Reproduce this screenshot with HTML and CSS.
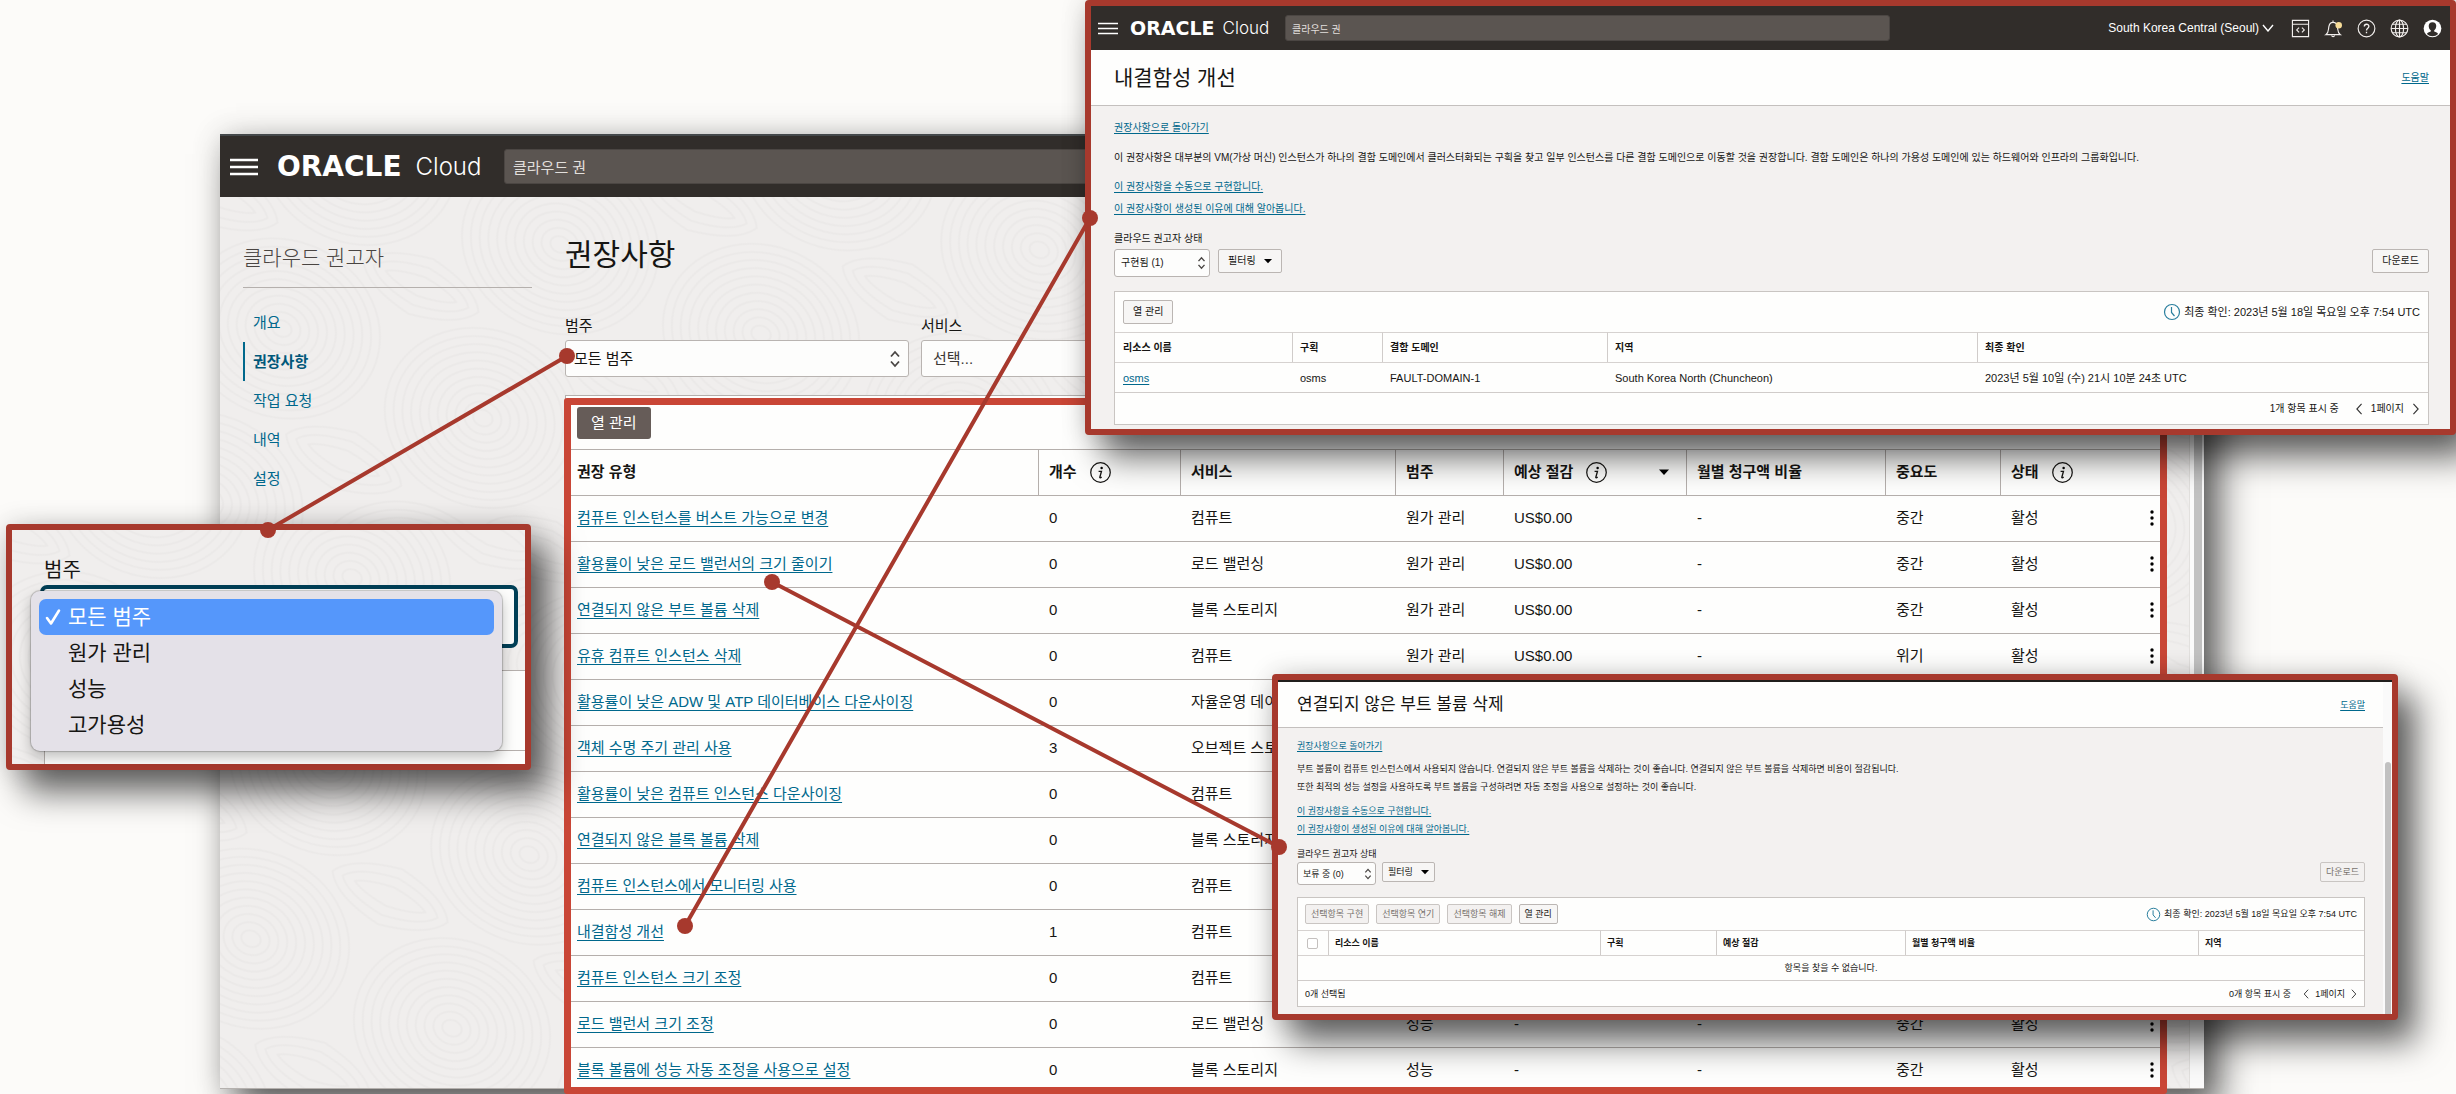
FILE: index.html
```html
<!DOCTYPE html>
<html lang="ko">
<head>
<meta charset="utf-8">
<title>클라우드 권고자 - 권장사항</title>
<link rel="stylesheet" href="styles.css">
</head>
<body>
<svg class="defs" width="0" height="0" aria-hidden="true">
  <defs>
    <symbol id="updown" viewBox="0 0 12 18"><path d="M2 6.500l4-4.500 4 4.500M2 11.500l4 4.500 4-4.500" fill="none" stroke="#4a4644" stroke-width="1.800"/></symbol>
    <symbol id="info" viewBox="0 0 24 24"><circle cx="12" cy="12" r="10.200" fill="none" stroke="#161513" stroke-width="1.300"/><circle cx="13.200" cy="7.300" r="1.300"/><path d="M10 10.800h3l-1.700 6.200c-.2.800.6.900 1.900-.2" fill="none" stroke="#161513" stroke-width="1.400"/></symbol>
    <symbol id="caret" viewBox="0 0 12 8"><path d="M0 1h12L6 7.500z"/></symbol>
    <symbol id="kebab" viewBox="0 0 4 18"><circle cx="2" cy="3" r="1.700"/><circle cx="2" cy="9" r="1.700"/><circle cx="2" cy="15" r="1.700"/></symbol>
    <symbol id="menu" viewBox="0 0 28 18"><path d="M0 2h28M0 9h28M0 16h28" stroke="#fff" stroke-width="2.400"/></symbol>
    <symbol id="clock" viewBox="0 0 18 18"><circle cx="9" cy="9" r="7.500" fill="none" stroke="#2a7f9e" stroke-width="1.200"/><path d="M8.500 4v5.500l3 3.500" fill="none" stroke="#2a7f9e" stroke-width="1.200"/></symbol>
    <symbol id="prev" viewBox="0 0 8 14"><path d="M7 1L1.500 7 7 13" fill="none" stroke="#333" stroke-width="1.300"/></symbol>
    <symbol id="next" viewBox="0 0 8 14"><path d="M1 1l5.500 6L1 13" fill="none" stroke="#333" stroke-width="1.300"/></symbol>
    <pattern id="swirl" width="220" height="190" patternUnits="userSpaceOnUse" patternTransform="rotate(24)">
      <g fill="none" stroke="#ebe9e8" stroke-width="2">
        <ellipse cx="110" cy="95" rx="10" ry="8"/><ellipse cx="110" cy="95" rx="19" ry="16"/><ellipse cx="110" cy="95" rx="28" ry="24"/><ellipse cx="110" cy="95" rx="37" ry="32"/><ellipse cx="110" cy="95" rx="46" ry="40"/><ellipse cx="110" cy="95" rx="55" ry="48"/><ellipse cx="110" cy="95" rx="64" ry="56"/><ellipse cx="110" cy="95" rx="73" ry="64"/><ellipse cx="110" cy="95" rx="82" ry="72"/><ellipse cx="110" cy="95" rx="91" ry="80"/><ellipse cx="110" cy="95" rx="100" ry="88"/>
        <path d="M0 30Q60 20 66-8M0 20Q50 14 56-8M0 10Q40 6 46-8M220 30Q160 20 154-8M220 20Q170 14 164-8M220 10Q180 6 174-8M0 160Q60 170 66 198M0 170Q50 176 56 198M0 180Q40 184 46 198M220 160Q160 170 154 198M220 170Q170 176 164 198M220 180Q180 184 174 198"/>
      </g>
    </pattern>
  </defs>
</svg>

<main class="scene">
  <section class="console">
    <header class="topbar">
      <button class="plain" aria-label="메뉴"><svg class="burger"><use href="#menu"/></svg></button>
      <a class="brand" href="#"><b>ORACLE</b> Cloud</a>
      <input class="search" type="text" value="클라우드 권" aria-label="검색">
    </header>
    <div class="workspace">
      <svg class="texture" aria-hidden="true"><rect width="100%" height="100%" fill="url(#swirl)"/></svg>
      <aside class="sidebar">
        <h2>클라우드 권고자</h2>
        <nav>
          <a href="#">개요</a>
          <a href="#" class="active">권장사항</a>
          <a href="#">작업 요청</a>
          <a href="#">내역</a>
          <a href="#">설정</a>
        </nav>
      </aside>
      <div class="content">
        <h1>권장사항</h1>
        <div class="filters">
          <div class="field">
            <label for="category">범주</label>
            <span class="picker"><select id="category"><option>모든 범주</option></select><svg><use href="#updown"/></svg></span>
          </div>
          <div class="field">
            <label for="service">서비스</label>
            <span class="picker"><select id="service" class="empty"><option>선택...</option></select><svg><use href="#updown"/></svg></span>
          </div>
        </div>
        <div class="panel">
          <div class="toolbar"><button class="dark">열 관리</button></div>
          <table>
            <colgroup><col class="c-type"><col class="c-count"><col class="c-service"><col class="c-cat"><col class="c-save"><col class="c-rate"><col class="c-level"><col></colgroup>
            <thead>
              <tr>
                <th>권장 유형</th>
                <th><span class="head">개수 <svg class="info"><use href="#info"/></svg></span></th>
                <th>서비스</th><th>범주</th>
                <th><span class="head">예상 절감 <svg class="info"><use href="#info"/></svg><svg class="sort"><use href="#caret"/></svg></span></th>
                <th>월별 청구액 비율</th><th>중요도</th>
                <th><span class="head">상태 <svg class="info"><use href="#info"/></svg></span></th>
              </tr>
            </thead>
            <tbody>
              <tr><td><a href="#">컴퓨트 인스턴스를 버스트 가능으로 변경</a></td><td>0</td><td>컴퓨트</td><td>원가 관리</td><td>US$0.00</td><td>-</td><td>중간</td><td><span class="state">활성<button class="plain" aria-label="작업"><svg class="kebab"><use href="#kebab"/></svg></button></span></td></tr>
              <tr><td><a href="#">활용률이 낮은 로드 밸런서의 크기 줄이기</a></td><td>0</td><td>로드 밸런싱</td><td>원가 관리</td><td>US$0.00</td><td>-</td><td>중간</td><td><span class="state">활성<button class="plain" aria-label="작업"><svg class="kebab"><use href="#kebab"/></svg></button></span></td></tr>
              <tr><td><a href="#">연결되지 않은 부트 볼륨 삭제</a></td><td>0</td><td>블록 스토리지</td><td>원가 관리</td><td>US$0.00</td><td>-</td><td>중간</td><td><span class="state">활성<button class="plain" aria-label="작업"><svg class="kebab"><use href="#kebab"/></svg></button></span></td></tr>
              <tr><td><a href="#">유휴 컴퓨트 인스턴스 삭제</a></td><td>0</td><td>컴퓨트</td><td>원가 관리</td><td>US$0.00</td><td>-</td><td>위기</td><td><span class="state">활성<button class="plain" aria-label="작업"><svg class="kebab"><use href="#kebab"/></svg></button></span></td></tr>
              <tr><td><a href="#">활용률이 낮은 ADW 및 ATP 데이터베이스 다운사이징</a></td><td>0</td><td>자율운영 데이</td><td></td><td></td><td></td><td></td><td></td></tr>
              <tr><td><a href="#">객체 수명 주기 관리 사용</a></td><td>3</td><td>오브젝트 스토</td><td></td><td></td><td></td><td></td><td></td></tr>
              <tr><td><a href="#">활용률이 낮은 컴퓨트 인스턴스 다운사이징</a></td><td>0</td><td>컴퓨트</td><td></td><td></td><td></td><td></td><td></td></tr>
              <tr><td><a href="#">연결되지 않은 블록 볼륨 삭제</a></td><td>0</td><td>블록 스토리지</td><td></td><td></td><td></td><td></td><td></td></tr>
              <tr><td><a href="#">컴퓨트 인스턴스에서 모니터링 사용</a></td><td>0</td><td>컴퓨트</td><td></td><td></td><td></td><td></td><td></td></tr>
              <tr><td><a href="#">내결함성 개선</a></td><td>1</td><td>컴퓨트</td><td></td><td></td><td></td><td></td><td></td></tr>
              <tr><td><a href="#">컴퓨트 인스턴스 크기 조정</a></td><td>0</td><td>컴퓨트</td><td></td><td></td><td></td><td></td><td></td></tr>
              <tr><td><a href="#">로드 밸런서 크기 조정</a></td><td>0</td><td>로드 밸런싱</td><td>성능</td><td>-</td><td>-</td><td>중간</td><td><span class="state">활성<button class="plain" aria-label="작업"><svg class="kebab"><use href="#kebab"/></svg></button></span></td></tr>
              <tr><td><a href="#">블록 볼륨에 성능 자동 조정을 사용으로 설정</a></td><td>0</td><td>블록 스토리지</td><td>성능</td><td>-</td><td>-</td><td>중간</td><td><span class="state">활성<button class="plain" aria-label="작업"><svg class="kebab"><use href="#kebab"/></svg></button></span></td></tr>
            </tbody>
          </table>
          <div class="highlight"></div>
        </div>
      </div>
      <div class="scrollbar"><i></i></div>
    </div>
  </section>

  <section class="callout category-callout">
    <svg class="texture" aria-hidden="true"><rect width="100%" height="100%" fill="url(#swirl)"/></svg>
    <label for="category-open">범주</label>
    <select id="category-open"><option></option></select>
    <div class="under"></div>
    <div class="menu" role="listbox" aria-label="범주">
      <button role="option" aria-selected="true"><svg viewBox="0 0 16 18"><path d="M2 10l4 5.500L14 2.500" fill="none" stroke="#fff" stroke-width="2.600" stroke-linecap="round" stroke-linejoin="round"/></svg>모든 범주</button>
      <button role="option">원가 관리</button>
      <button role="option">성능</button>
      <button role="option">고가용성</button>
    </div>
  </section>

  <section class="callout detail fault">
    <header class="topbar">
      <button class="plain" aria-label="메뉴"><svg class="burger"><use href="#menu"/></svg></button>
      <a class="brand" href="#"><b>ORACLE</b> Cloud</a>
      <input class="search" type="text" value="클라우드 권" aria-label="검색">
      <div class="tools">
        <button class="plain region">South Korea Central (Seoul) <svg width="12" height="8" viewBox="0 0 12 8"><path d="M1 1l5 6 5-6" fill="none" stroke="#fff" stroke-width="1.400"/></svg></button>
        <button class="plain" aria-label="개발자 도구"><svg class="tool" viewBox="0 0 20 20"><path d="M1.500 1.500h17v17h-17zM1.500 5.500h17M8.500 9L6 11.500 8.500 14M11.500 9l2.500 2.500-2.500 2.500" fill="none" stroke="#f2efed" stroke-width="1.200"/></svg></button>
        <button class="plain" aria-label="알림"><svg class="tool" viewBox="0 0 20 20"><path d="M2 16.500c3-2 2.500-4 3-8C5.500 5 7 3.500 9.500 3.500S13.800 5 14.200 8.500c.5 4 0 6 3 8zM8 17.500c.5 1.500 2.600 1.500 3.200 0M9.500 3.500V1.500" fill="none" stroke="#f2efed" stroke-width="1.200"/><circle cx="15.500" cy="6.500" r="3.400" fill="#f7dc98"/></svg></button>
        <button class="plain" aria-label="도움말"><svg class="tool" viewBox="0 0 20 20"><circle cx="10" cy="10" r="8.800" fill="none" stroke="#f2efed" stroke-width="1.200"/><path d="M7.700 8c0-3.300 4.800-3.200 4.800-.3 0 2-2.500 2-2.500 4.300M10 13.300v1.600" fill="none" stroke="#f2efed" stroke-width="1.400"/></svg></button>
        <button class="plain" aria-label="언어"><svg class="tool" viewBox="0 0 20 20"><g fill="none" stroke="#f2efed" stroke-width="1.200"><circle cx="10" cy="10" r="8.800"/><ellipse cx="10" cy="10" rx="4.300" ry="8.800"/><path d="M10 1v18M1.200 10h17.600M2.500 5.500h15M2.500 14.500h15"/></g></svg></button>
        <button class="plain" aria-label="프로파일"><svg class="tool" viewBox="0 0 20 20"><circle cx="10" cy="10" r="9.300" fill="#fff"/><path d="M10 3.500c-5.500 0-4.500 7-1.800 8.300v1.400c-2 .5-3.500 1.200-4 2.600 3.300 3.100 8.300 3.100 11.600 0-.5-1.400-2-2.100-4-2.600v-1.400c2.700-1.300 3.700-8.300-1.800-8.300z" fill="#312d2a"/></svg></button>
      </div>
    </header>
    <div class="heading"><h2>내결함성 개선</h2><a href="#">도움말</a></div>
    <div class="body">
      <a class="back" href="#">권장사항으로 돌아가기</a>
      <p>이 권장사항은 대부분의 VM(가상 머신) 인스턴스가 하나의 결함 도메인에서 클러스터화되는 구획을 찾고 일부 인스턴스를 다른 결함 도메인으로 이동할 것을 권장합니다. 결함 도메인은 하나의 가용성 도메인에 있는 하드웨어와 인프라의 그룹화입니다.</p>
      <div class="links"><a href="#">이 권장사항을 수동으로 구현합니다.</a><a href="#">이 권장사항이 생성된 이유에 대해 알아봅니다.</a></div>
      <label for="fault-status">클라우드 권고자 상태</label>
      <div class="controls">
        <span class="picker"><select id="fault-status"><option>구현됨 (1)</option></select><svg><use href="#updown"/></svg></span>
        <button class="light">필터링 <svg class="drop"><use href="#caret"/></svg></button>
        <button class="light push">다운로드</button>
      </div>
      <div class="panel">
        <div class="toolbar"><button class="light">열 관리</button><span class="checked"><svg class="clock"><use href="#clock"/></svg>최종 확인: 2023년 5월 18일 목요일 오후 7:54 UTC</span></div>
        <table>
          <colgroup><col class="f-name"><col class="f-comp"><col class="f-domain"><col class="f-region"><col></colgroup>
          <thead><tr><th>리소스 이름</th><th>구획</th><th>결함 도메인</th><th>지역</th><th>최종 확인</th></tr></thead>
          <tbody><tr><td><a href="#">osms</a></td><td>osms</td><td>FAULT-DOMAIN-1</td><td>South Korea North (Chuncheon)</td><td>2023년 5월 10일 (수) 21시 10분 24초 UTC</td></tr></tbody>
        </table>
        <div class="pager"><span class="total">1개 항목 표시 중</span><button class="plain" aria-label="이전"><svg class="arrow"><use href="#prev"/></svg></button><span>1페이지</span><button class="plain" aria-label="다음"><svg class="arrow"><use href="#next"/></svg></button></div>
      </div>
    </div>
  </section>

  <section class="callout detail volume">
    <div class="strip"></div>
    <div class="split">
      <div class="pane">
        <div class="heading"><h2>연결되지 않은 부트 볼륨 삭제</h2><a href="#">도움말</a></div>
        <div class="body">
          <a class="back" href="#">권장사항으로 돌아가기</a>
          <p>부트 볼륨이 컴퓨트 인스턴스에서 사용되지 않습니다. 연결되지 않은 부트 볼륨을 삭제하는 것이 좋습니다. 연결되지 않은 부트 볼륨을 삭제하면 비용이 절감됩니다.<br>또한 최적의 성능 설정을 사용하도록 부트 볼륨을 구성하려면 자동 조정을 사용으로 설정하는 것이 좋습니다.</p>
          <div class="links"><a href="#">이 권장사항을 수동으로 구현합니다.</a><a href="#">이 권장사항이 생성된 이유에 대해 알아봅니다.</a></div>
          <label for="volume-status">클라우드 권고자 상태</label>
          <div class="controls">
            <span class="picker"><select id="volume-status"><option>보류 중 (0)</option></select><svg><use href="#updown"/></svg></span>
            <button class="light">필터링 <svg class="drop"><use href="#caret"/></svg></button>
            <button class="light push" disabled>다운로드</button>
          </div>
          <div class="panel">
            <div class="toolbar"><button class="light" disabled>선택항목 구현</button><button class="light" disabled>선택항목 연기</button><button class="light" disabled>선택항목 해제</button><button class="light">열 관리</button><span class="checked"><svg class="clock"><use href="#clock"/></svg>최종 확인: 2023년 5월 18일 목요일 오후 7:54 UTC</span></div>
            <table>
              <colgroup><col class="v-check"><col class="v-name"><col class="v-comp"><col class="v-save"><col class="v-rate"><col></colgroup>
              <thead><tr><th><input type="checkbox" aria-label="모두 선택"></th><th>리소스 이름</th><th>구획</th><th>예상 절감</th><th>월별 청구액 비율</th><th>지역</th></tr></thead>
              <tbody><tr><td class="none" colspan="6">항목을 찾을 수 없습니다.</td></tr></tbody>
            </table>
            <div class="pager"><span class="picked">0개 선택됨</span><span class="total">0개 항목 표시 중</span><button class="plain" aria-label="이전"><svg class="arrow"><use href="#prev"/></svg></button><span>1페이지</span><button class="plain" aria-label="다음"><svg class="arrow"><use href="#next"/></svg></button></div>
          </div>
        </div>
      </div>
      <div class="track"><i></i></div>
    </div>
  </section>

  <svg class="connectors" aria-hidden="true">
    <g stroke="#a7392d" stroke-width="4"><path d="M567 356L268 530M1090 218L685 926M772 582L1279 847"/></g>
    <g fill="#a7392d"><circle cx="567" cy="356" r="8"/><circle cx="268" cy="530" r="8"/><circle cx="1090" cy="218" r="8"/><circle cx="685" cy="926" r="8"/><circle cx="772" cy="582" r="8"/><circle cx="1279" cy="847" r="8"/></g>
  </svg>
</main>
</body>
</html>
```
FILE: styles.css
```css
* { box-sizing: border-box; }
body {
  margin: 0;
  background: #fcfbf9;
  color: #161513;
  font-family: "Liberation Sans", "Noto Sans CJK KR", sans-serif;
  font-size: 15px;
  line-height: 22px;
}
h1, h2, p { margin: 0; font-weight: 400; }
a { color: #00688c; text-decoration: underline; text-underline-offset: 3px; }
button, input, select { font: inherit; color: inherit; margin: 0; }
svg { display: block; flex: none; }
label { display: block; }
.defs { position: absolute; }
.plain { display: flex; align-items: center; padding: 0; border: 0; background: none; }

.scene { position: relative; padding: 134px 252px 5px 220px; overflow: hidden; }
.connectors { position: absolute; inset: 0; width: 100%; height: 100%; pointer-events: none; }
.texture { position: absolute; inset: 0; width: 100%; height: 100%; }

/* top bar */
.topbar { display: flex; align-items: center; background: #312d2a; color: #fff; }
.brand { display: flex; align-items: center; color: #fff; text-decoration: none; font-family: Inter, sans-serif; font-weight: 300; }
.brand b { font-family: "DejaVu Sans", sans-serif; font-weight: 700; }
.search { border: 1px solid #4b4643; border-radius: 3px; background: #5b5551; color: #e2dfdc; }

/* main console */
.console {
  position: relative;
  border-bottom: 1px solid #b5b1ae;
  box-shadow: 0 0 28px rgba(0, 0, 0, .16), 16px 20px 34px rgba(0, 0, 0, .6);
}
.console > .topbar { height: 63px; padding: 0 14px 0 10px; border-top: 2px solid #44484a; }
.console .burger { width: 28px; height: 18px; }
.console .brand { width: 227px; margin-left: 19px; gap: 14px; font-size: 24px; }
.console .brand b { font-size: 28px; }
.console .search { flex: 1; height: 35px; padding: 0 8px; }
.workspace { position: relative; display: flex; background: #f0eeed; }
.sidebar { position: relative; flex: none; width: 322px; padding: 46px 10px 0 23px; }
.sidebar h2 { padding-bottom: 14px; border-bottom: 1px solid #b5b0ad; font-size: 21px; line-height: 30px; font-weight: 300; color: #4a4542; font-family: "Liberation Sans", "Noto Sans CJK KR Light", "Noto Sans CJK KR", sans-serif; }
.sidebar nav { padding-top: 15px; }
.sidebar nav a { display: block; padding-left: 8px; border-left: 2px solid transparent; line-height: 39px; text-decoration: none; }
.sidebar nav a.active { border-color: #00688c; font-weight: 700; color: #00587a; }
.content { position: relative; flex: 1; padding: 38px 38px 0 23px; }
.content h1 { font-size: 30px; line-height: 40px; }
.filters { display: flex; gap: 12px; margin: 41px 0 18px; }
.field { width: 344px; }
.field label { line-height: 20px; margin-bottom: 4px; }
.picker { position: relative; display: block; }
.picker select { display: block; width: 100%; height: 100%; appearance: none; border: 1px solid #b9b4b1; border-radius: 3px; background: #fdfdfc; }
.picker svg { position: absolute; right: 8px; top: 50%; transform: translateY(-50%); width: 12px; height: 18px; }
.field .picker { height: 37px; }
.field select { padding: 0 8px; }
.field select.empty { padding-left: 11px; color: #3c3835; }

.panel { position: relative; border: 1px solid #c9c5c2; background: #fefefd; }
.toolbar { display: flex; align-items: center; }
table { width: 100%; border-collapse: separate; border-spacing: 0; table-layout: fixed; }
th { text-align: left; font-weight: 700; }
th, td { white-space: nowrap; overflow: hidden; }
.content .panel { border-bottom: 0; border-color: #b5afac; }
.content .toolbar { padding: 11px 11px 10px; }
.dark { height: 32px; padding: 0 14px; border: 0; border-radius: 3px; background: #665c58; color: #fff; }
.content th, .content td { height: 46px; padding: 11px 11px 12px; border-bottom: 1px solid #b5afac; }
.content th { border-top: 1px solid #b5afac; border-left: 1px solid #b5afac; height: 47px; padding: 11px 10px 12px; }
.content th:first-child { border-left: 0; padding-left: 11px; }
.content tbody tr:last-child td { height: 40px; padding-bottom: 7px; border-bottom: 0; }
.c-type { width: 472px; }
.c-count { width: 142px; }
.c-service { width: 215px; }
.c-cat { width: 108px; }
.c-save { width: 183px; }
.c-rate { width: 199px; }
.c-level { width: 115px; }
.head { display: flex; align-items: center; gap: 12px; }
.info { width: 23px; height: 23px; margin: -1px 0; }
.sort { width: 10px; height: 8px; margin-left: auto; margin-right: 7px; }
.state { display: flex; justify-content: space-between; }
.kebab { width: 4px; height: 18px; }
.highlight { position: absolute; inset: 2px -2px -6px -2px; border: 7px solid #c94636; border-radius: 3px; pointer-events: none; }
.scrollbar { position: absolute; top: 0; right: 0; bottom: 0; width: 15px; padding: 0 2px 0 4px; border-left: 1px solid #e2e0de; background: #fafafa; }
.scrollbar i { display: block; height: 88%; border-radius: 0 0 4px 4px; background: #c1c1c1; }

/* callouts */
.callout {
  position: absolute;
  border: 6px solid #a7392d;
  border-radius: 4px;
  background: #f3f1f0;
  box-shadow: 0 0 26px rgba(0, 0, 0, .16), 18px 22px 34px rgba(0, 0, 0, .6);
}
.category-callout { left: 6px; top: 524px; width: 525px; padding: 27px 0 0 28px; background: #f0eeed; }
.category-callout label { position: relative; padding-left: 4px; font-size: 20px; line-height: 26px; }
.category-callout select { position: relative; display: block; appearance: none; width: 478px; height: 63px; margin: 2px 0 22px; border: 4px solid #003f56; border-radius: 7px; background: #fdfdfc; }
.under { position: relative; height: 94px; margin-left: 4px; padding-top: 79px; border: 1px solid #b5afac; border-width: 1px 0 0 1px; background: #fdfdfc; }
.under::after { content: ""; display: block; border-top: 1px solid #b5afac; }
.menu { position: absolute; left: 19px; top: 61px; width: 471px; padding: 8px; border-radius: 9px; background: #e4e1e8; box-shadow: 0 0 1px 1px rgba(0, 0, 0, .2), 0 6px 14px rgba(0, 0, 0, .25); }
.menu button { display: flex; align-items: center; width: 100%; height: 36px; padding: 0 0 0 29px; border: 0; border-radius: 7px; background: none; font-size: 21px; }
.menu button[aria-selected] { padding-left: 6px; gap: 7px; background: #5597fb; color: #fff; }
.menu svg { width: 16px; height: 18px; }

.heading { display: flex; align-items: center; justify-content: space-between; border-bottom: 1px solid #c4c0be; background: #fefefd; }
.detail a { text-underline-offset: 2px; }
.detail .back, .links a { display: table; }
.controls { display: flex; align-items: flex-start; }
.light { display: flex; align-items: center; justify-content: center; white-space: nowrap; border: 1px solid #bbb6b3; border-radius: 2px; background: #f7f6f5; }
.light:disabled { color: #77716d; background: #f3f1f0; border-color: #c9c5c2; }
.push, .checked { margin-left: auto; }
.checked { display: flex; align-items: center; gap: 3px; }
.drop { width: 8px; height: 6px; margin-left: 8px; }
.detail th, .detail td { border-top: 1px solid #d6d2d0; }
.detail th + th { border-left: 1px solid #d0ccca; }
.pager { display: flex; align-items: center; border-top: 1px solid #d0ccca; }
.picked { margin-right: auto; }

.fault { left: 1085px; right: 0; top: 0; font-size: 10px; line-height: 22px; }
.fault > .topbar { height: 44px; padding: 0 8px 0 7px; }
.fault .burger { width: 20px; height: 13px; }
.fault .brand { width: 155px; margin-left: 12px; gap: 8px; font-size: 17px; }
.fault .brand b { font-size: 19px; }
.fault .search { width: 605px; height: 26px; padding: 0 6px; }
.tools { display: flex; align-items: center; gap: 14px; margin-left: auto; }
.region { gap: 3px; margin-right: 3px; font-size: 12px; }
.tool { width: 19px; height: 19px; }
.fault .heading { height: 56px; padding: 0 21px 0 23px; }
.fault h2 { font-size: 21px; line-height: 30px; }
.fault .body { padding: 11px 21px 4px 23px; }
.fault p { margin: 8px 0 7px; }
.fault label { margin-top: 11px; line-height: 16px; }
.fault .controls { gap: 8px; margin: 2px 0 14px; }
.fault .picker { width: 96px; height: 28px; }
.fault .picker select { padding: 0 6px; }
.fault .picker svg { right: 4px; width: 9px; height: 14px; }
.fault .light { height: 24px; padding: 0 9px; }
.fault .toolbar { height: 40px; padding: 0 8px; }
.fault .checked, .fault td { font-size: 11px; }
.fault th, .fault td { height: 30px; padding: 0 8px; }
.fault th + th { padding-left: 7px; }
.f-name { width: 177px; }
.f-comp { width: 90px; }
.f-domain { width: 225px; }
.f-region { width: 370px; }
.fault .clock { width: 18px; height: 18px; }
.fault .pager { height: 32px; padding: 0 8px; gap: 8px; }
.fault .total { margin-left: auto; margin-right: 8px; }
.fault .arrow { width: 8px; height: 12px; }

.volume { left: 1272px; right: 58px; top: 674px; font-size: 9px; line-height: 18px; }
.strip { height: 2px; background: #201e1c; }
.split { display: flex; }
.pane { flex: 1; }
.track { width: 9px; padding: 80px 1px 0 2px; background: #fafafa; display: flex; }
.track i { flex: 1; border-radius: 3px 3px 0 0; background: #c1c1c1; }
.volume .heading { height: 46px; padding: 0 18px 0 19px; }
.volume h2 { font-size: 17px; line-height: 24px; }
.volume .body { padding: 9px 18px 7px 19px; }
.volume p { margin: 5px 0 6px; }
.volume label { margin-top: 9px; line-height: 14px; }
.volume .controls { gap: 6px; margin: 1px 0 12px; }
.volume .picker { width: 79px; height: 23px; }
.volume .picker select { padding: 0 5px; }
.volume .picker svg { right: 4px; width: 8px; height: 12px; }
.volume .light { height: 20px; padding: 0 5px; }
.volume .toolbar { height: 32px; padding: 0 7px; gap: 7px; }
.volume th, .volume td { height: 25px; padding: 0 7px; }
.volume th + th { padding-left: 6px; }
.v-check { width: 30px; }
.v-name { width: 272px; }
.v-comp { width: 116px; }
.v-save { width: 189px; }
.v-rate { width: 293px; }
.volume th input { display: block; appearance: none; width: 11px; height: 11px; margin-left: 2px; border: 1px solid #c4c0be; border-radius: 2px; background: #fff; }
.volume .none { text-align: center; }
.volume .clock { width: 15px; height: 15px; }
.volume .pager { height: 26px; padding: 0 7px; gap: 6px; }
.volume .total { margin-right: 6px; }
.volume .arrow { width: 6px; height: 10px; }
```
